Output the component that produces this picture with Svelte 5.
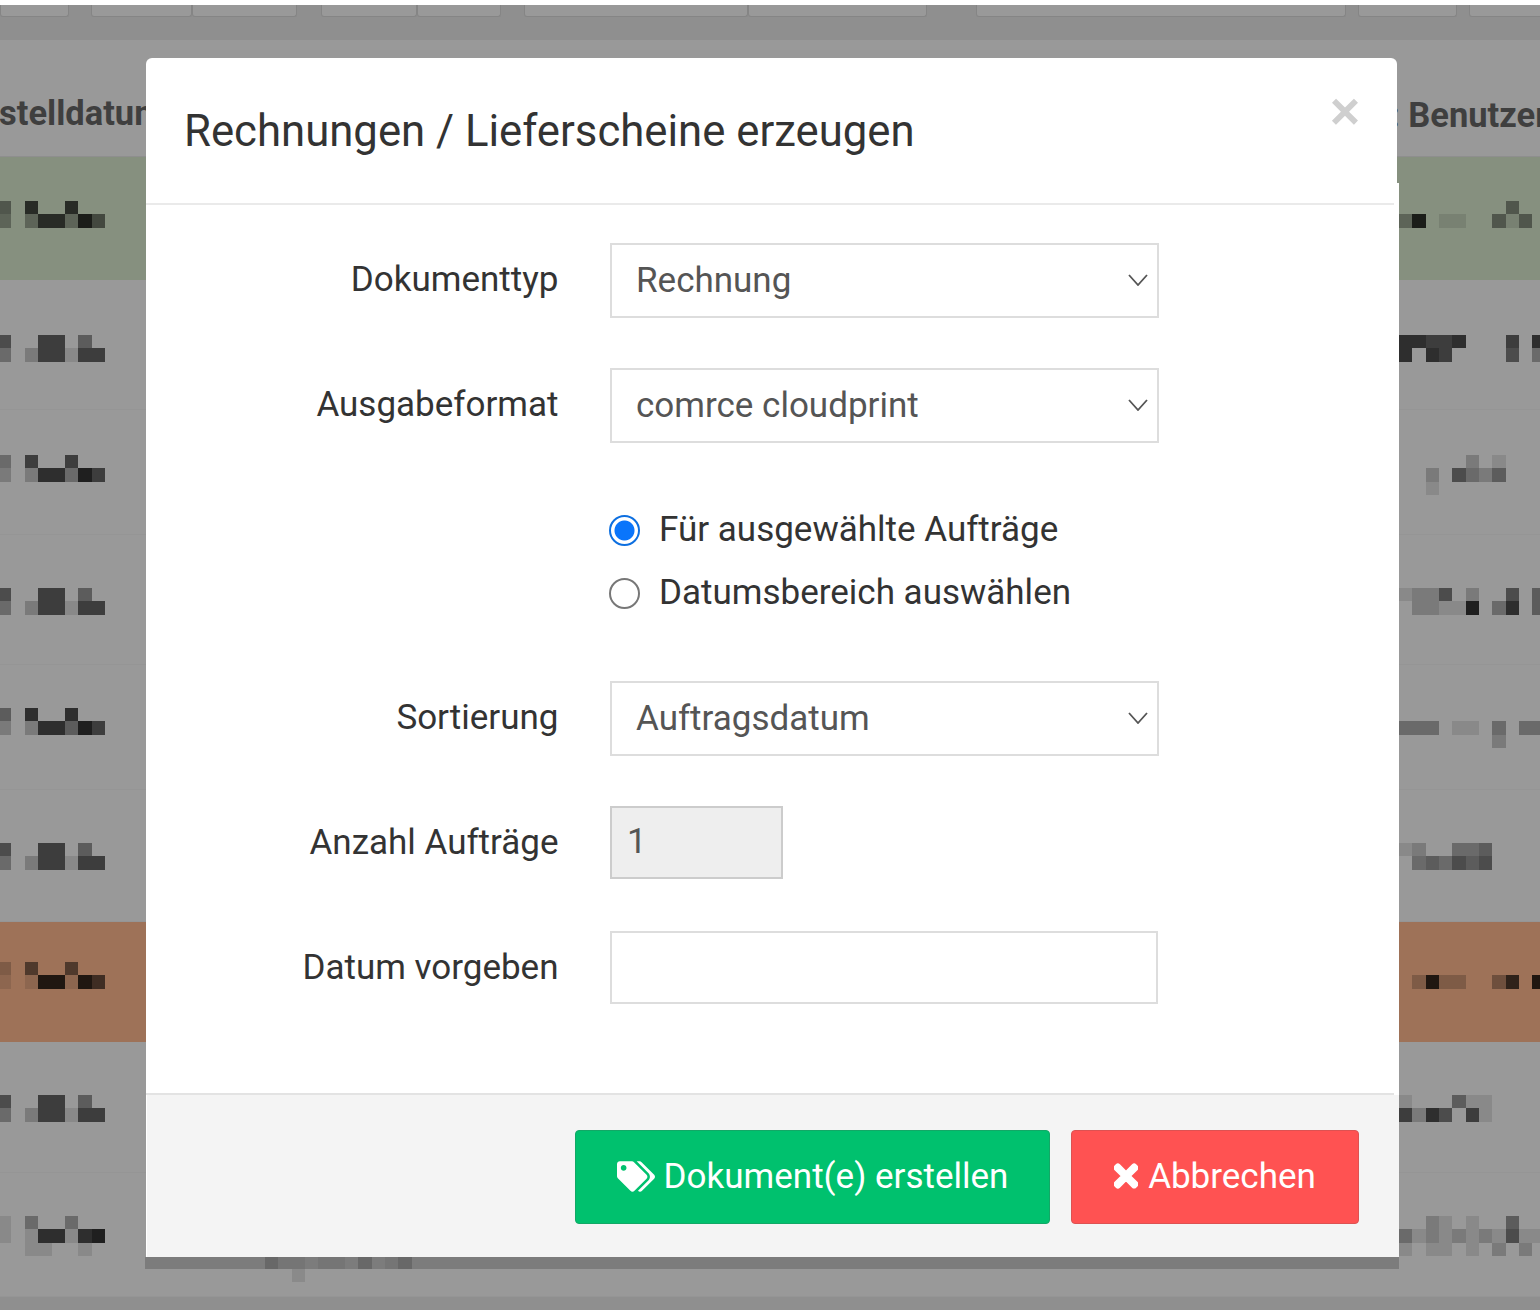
<script>
  const tabs = [
    { w: 69, gap: 0 }, { w: 101, gap: 22 }, { w: 105, gap: 0 }, { w: 96, gap: 24 }, { w: 84, gap: 0 },
    { w: 224, gap: 23 }, { w: 179, gap: 0 }, { w: 370, gap: 49 }, { w: 99, gap: 12 }, { w: 80, gap: 12 }
  ];
  const B = ['5..66.4.', '3.266166'];
  const rows = [
    { h: 123, pad: 44, tone: 'green', left: ['4.7..7..', '3.377385'], right: ['........4..', '38.11..414.'] },
    { h: 130, pad: 55, tone: '', left: B, right: ['77667...6.7', '7.76....5.3'] },
    { h: 125, pad: 45, tone: '', left: ['3.6..6..', '2.277386'], right: ['.....2.1...', '..2.5324...', '..1........'] },
    { h: 130, pad: 53, tone: '', left: B, right: ['1225.2..5.4', '.22118.37.4'] },
    { h: 125, pad: 43, tone: '', left: ['4.7..7..', '2.277486'], right: ['...........', '333.11.3.33', '.......2...'] },
    { h: 132, pad: 53, tone: '', left: B, right: ['12..334....', '.343545....'] },
    { h: 120, pad: 40, tone: 'orange', left: ['2.5..5..', '1.188186'], right: ['...........', '.2822..37.8'] },
    { h: 131, pad: 53, tone: '', left: B, right: ['1...411....', '6275.61....'] },
    { h: 124, pad: 43, tone: '', left: ['1.3..3..', '1.177178', '..11..1.'], right: ['..21.1..4..', '31212121511', '1.11.1.2.2.'] }
  ];
  const alpha = (c) => (c === '.' ? 'transparent' : `rgba(0,0,0,${Number(c) / 10})`);
</script>

<div class="page">
  <div class="topline"></div>
  <div class="tabbar">
    {#each tabs as t}
      <span class="tab" style="width:{t.w}px;margin-left:{t.gap}px"></span>
    {/each}
  </div>
  <div class="thead">
    <span class="th-left">stelldatum</span>
    <span class="th-right">: Benutzer</span>
  </div>
  {#each rows as r}
    <div class="row {r.tone}" style="height:{r.h}px;padding-top:{r.pad}px">
      <div class="px px-left">
        {#each r.left as line}
          {#each line.split('') as c}
            <i style="background:{alpha(c)}"></i>
          {/each}
        {/each}
      </div>
      <div class="px px-right">
        {#each r.right as line}
          {#each line.split('') as c}
            <i style="background:{alpha(c)}"></i>
          {/each}
        {/each}
      </div>
    </div>
  {/each}
  <div class="bottomstrip"></div>

  <div class="dialog" role="dialog" aria-labelledby="dlg-title">
    <div class="head">
      <h4 id="dlg-title">Rechnungen / Lieferscheine erzeugen</h4>
      <button class="close" type="button" aria-label="Schließen">×</button>
    </div>
    <div class="sheet">
      <hr class="rule first" />
      <form class="form">
        <label class="lbl" for="f-typ">Dokumenttyp</label>
        <div class="sel">
          <select id="f-typ"><option>Rechnung</option><option>Lieferschein</option></select>
          <svg viewBox="0 0 20 12" aria-hidden="true"><path d="M1 1l9 10 9-10" /></svg>
        </div>

        <label class="lbl" for="f-fmt">Ausgabeformat</label>
        <div class="sel">
          <select id="f-fmt"><option>comrce cloudprint</option><option>PDF</option></select>
          <svg viewBox="0 0 20 12" aria-hidden="true"><path d="M1 1l9 10 9-10" /></svg>
        </div>

        <div class="radios">
          <label class="radio"><input type="radio" name="scope" checked /><span>Für ausgewählte Aufträge</span></label>
          <label class="radio"><input type="radio" name="scope" /><span>Datumsbereich auswählen</span></label>
        </div>

        <label class="lbl" for="f-sort">Sortierung</label>
        <div class="sel">
          <select id="f-sort"><option>Auftragsdatum</option><option>Kunde</option></select>
          <svg viewBox="0 0 20 12" aria-hidden="true"><path d="M1 1l9 10 9-10" /></svg>
        </div>

        <label class="lbl" for="f-num">Anzahl Aufträge</label>
        <input id="f-num" class="inp short" value="1" disabled />

        <label class="lbl" for="f-date">Datum vorgeben</label>
        <input id="f-date" class="inp wide" />
      </form>
      <hr class="rule last" />
      <div class="foot">
        <button class="btn ok" type="button">
          <svg class="tags" viewBox="0 0 640 512" aria-hidden="true"><path d="M497.941 225.941L286.059 14.059A48 48 0 0 0 252.118 0H48C21.49 0 0 21.49 0 48v204.118a48 48 0 0 0 14.059 33.941l211.882 211.882c18.744 18.745 49.136 18.746 67.882 0l204.118-204.118c18.745-18.745 18.745-49.137 0-67.882zM112 160c-26.51 0-48-21.49-48-48s21.49-48 48-48 48 21.49 48 48-21.49 48-48 48zm513.941 133.823L421.823 497.941c-18.745 18.745-49.137 18.745-67.882 0l-.36-.36L527.64 323.522c16.999-16.999 26.36-39.6 26.36-63.64s-9.362-46.641-26.36-63.64L331.397 0h48.721a48 48 0 0 1 33.941 14.059l211.882 211.882c18.745 18.745 18.745 49.137 0 67.882z" /></svg>
          Dokument(e) erstellen
        </button>
        <button class="btn no" type="button">
          <svg class="times" viewBox="0 0 352 512" aria-hidden="true"><path d="M242.72 256l100.07-100.07c12.28-12.28 12.28-32.19 0-44.48l-22.24-22.24c-12.28-12.28-32.19-12.28-44.48 0L176 189.28 75.93 89.21c-12.28-12.28-32.19-12.28-44.48 0L9.21 111.45c-12.28 12.28-12.28 32.19 0 44.48L109.28 256 9.21 356.07c-12.28 12.28-12.28 32.19 0 44.48l22.24 22.24c12.28 12.28 32.2 12.28 44.48 0L176 322.72l100.07 100.07c12.28 12.28 32.2 12.28 44.48 0l22.24-22.24c12.28-12.28 12.28-32.19 0-44.48L242.72 256z" /></svg>
          Abbrechen
        </button>
      </div>
    </div>
    <div class="under">
      <div class="under-px">
        <i class="u2"></i><i class="u1"></i><i class="u1"></i><i></i><i class="u1"></i><i class="u1"></i><i></i><i class="u2"></i><i></i><i class="u1"></i><i class="u2"></i>
      </div>
      <span class="under-drop"></span>
    </div>
  </div>
</div>

<style>
  :global(body) {
    margin: 0;
    background: #999;
  }
  .page {
    position: relative;
    width: 1540px;
    height: 1310px;
    overflow: hidden;
    background: #999;
    font-family: Roboto, "Liberation Sans", sans-serif;
    color: #333;
  }
  .topline {
    height: 5px;
    background: #fff;
  }
  .tabbar {
    display: flex;
    height: 35px;
    background: #8f8f8f;
    align-items: flex-start;
  }
  .tab {
    flex: none;
    box-sizing: border-box;
    height: 12px;
    background: #999;
    border: 1px solid #858585;
    border-top: 0;
    border-radius: 0 0 3px 3px;
  }
  .thead {
    box-sizing: border-box;
    position: relative;
    height: 117px;
    border-bottom: 1px solid #8e8e8e;
    font-size: 34.5px;
    font-weight: 700;
    color: #3f3f3f;
    white-space: nowrap;
  }
  .th-left {
    position: absolute;
    left: -1px;
    top: 53px;
  }
  .th-right {
    position: absolute;
    left: 1390px;
    top: 55px;
  }
  .row {
    box-sizing: border-box;
    display: flex;
    justify-content: space-between;
    align-items: flex-start;
    border-bottom: 1px solid #959595;
    background: #999;
  }
  .row.green {
    background: #86907f;
    border-bottom-color: #86907f;
  }
  .row.orange {
    background: #9e7258;
    border-bottom-color: #9e7258;
  }
  .px {
    display: grid;
    grid-auto-rows: 13.33px;
  }
  .px i {
    display: block;
  }
  .px-left {
    grid-template-columns: 11px 14px repeat(6, 13.33px);
  }
  .px-right {
    grid-template-columns: repeat(11, 13.33px);
    margin-right: -5.6px;
  }
  .bottomstrip {
    height: 13px;
    background: #8f8f8f;
  }
  .dialog {
    position: absolute;
    left: 146px;
    top: 58px;
    width: 1253px;
  }
  .head {
    position: relative;
    box-sizing: border-box;
    width: 1251px;
    height: 125px;
    padding: 48px 38px 0;
    background: #fff;
    border-radius: 6px 6px 0 0;
  }
  h4 {
    margin: 0;
    font-size: 43.7px;
    font-weight: 400;
    line-height: 50px;
    color: #333;
  }
  .close {
    position: absolute;
    right: 37px;
    top: 25px;
    padding: 0;
    border: 0;
    background: none;
    font-family: "Liberation Sans", sans-serif;
    font-size: 52px;
    font-weight: 700;
    line-height: 56px;
    color: #cfcfcf;
  }
  .sheet {
    background: #fff;
  }
  .rule {
    height: 2px;
    margin: 0 5px 0 0;
    border: 0;
  }
  .rule.first {
    background: #eaeaea;
    position: relative;
    top: 20px;
  }
  .rule.last {
    background: #e3e3e3;
  }
  .form {
    box-sizing: border-box;
    display: grid;
    grid-template-columns: 412.5px 549px;
    column-gap: 51.5px;
    row-gap: 50px;
    align-items: center;
    align-content: start;
    height: 908px;
    padding-top: 58px;
    font-size: 35px;
  }
  .lbl {
    padding-bottom: 2px;
    text-align: right;
    color: #333;
  }
  .sel {
    position: relative;
    height: 75px;
  }
  select {
    display: block;
    box-sizing: border-box;
    width: 100%;
    height: 75px;
    padding: 0 60px 0 24px;
    appearance: none;
    background: #fff;
    border: 2px solid #ddd;
    border-radius: 0;
    font: inherit;
    color: #555;
    outline: 0;
  }
  .sel svg {
    position: absolute;
    right: 11px;
    top: 31px;
    width: 20px;
    height: 12px;
    fill: none;
    stroke: #555;
    stroke-width: 1.8;
    pointer-events: none;
  }
  .radios {
    grid-column: 2;
    padding: 6px 0;
  }
  .radio {
    display: flex;
    align-items: center;
    gap: 19px;
    height: 63px;
    color: #333;
  }
  .radio span {
    margin-bottom: 2px;
  }
  .radio input {
    box-sizing: border-box;
    appearance: none;
    flex: none;
    width: 31px;
    height: 31px;
    margin: 0 0 0 -1px;
    background: #fff;
    border: 2.5px solid #777;
    border-radius: 50%;
  }
  .radio input:checked {
    border-color: #0d6fe0;
    background: radial-gradient(circle, #0a75fb 0 9.5px, #fff 10.5px);
  }
  .inp {
    box-sizing: border-box;
    display: block;
    height: 73px;
    padding: 0 15px 2px;
    margin-bottom: 2px;
    background: #fff;
    border: 2px solid #ddd;
    font: inherit;
    color: #555;
    outline: 0;
  }
  .inp.short {
    width: 173px;
    background: #eee;
    border-color: #ccc;
  }
  .inp.wide {
    width: 548px;
  }
  .foot {
    box-sizing: border-box;
    display: flex;
    justify-content: flex-end;
    gap: 21px;
    height: 162px;
    margin-left: 1px;
    padding: 35px 40px 0 0;
    background: #f4f4f4;
  }
  .btn {
    display: flex;
    align-items: center;
    justify-content: center;
    box-sizing: border-box;
    height: 94px;
    padding: 0 0 2px;
    border: 1px solid;
    border-radius: 4px;
    font: inherit;
    font-size: 35px;
    color: #fff;
  }
  .btn.ok {
    width: 475px;
    background: #00c16e;
    border-color: #12a866;
  }
  .btn.no {
    width: 288px;
    background: #ff5252;
    border-color: #dd5252;
  }
  .tags {
    width: 38px;
    height: 31px;
    margin-right: 9px;
    fill: #fff;
  }
  .times {
    width: 24px;
    height: 34px;
    margin-right: 10px;
    fill: #fff;
    stroke: #fff;
    stroke-width: 24;
  }
  .under {
    height: 12px;
    margin-left: -1px;
    background: #7c7c7c;
  }
  .under-px {
    display: flex;
    height: 12px;
    padding-left: 120px;
  }
  .under-px i {
    width: 13.33px;
  }
  .under-px .u1 {
    background: #757575;
  }
  .under-px .u2 {
    background: #686868;
  }
  .under-drop {
    display: block;
    width: 13px;
    height: 13px;
    margin-left: 147px;
    background: #8a8a8a;
  }
</style>
